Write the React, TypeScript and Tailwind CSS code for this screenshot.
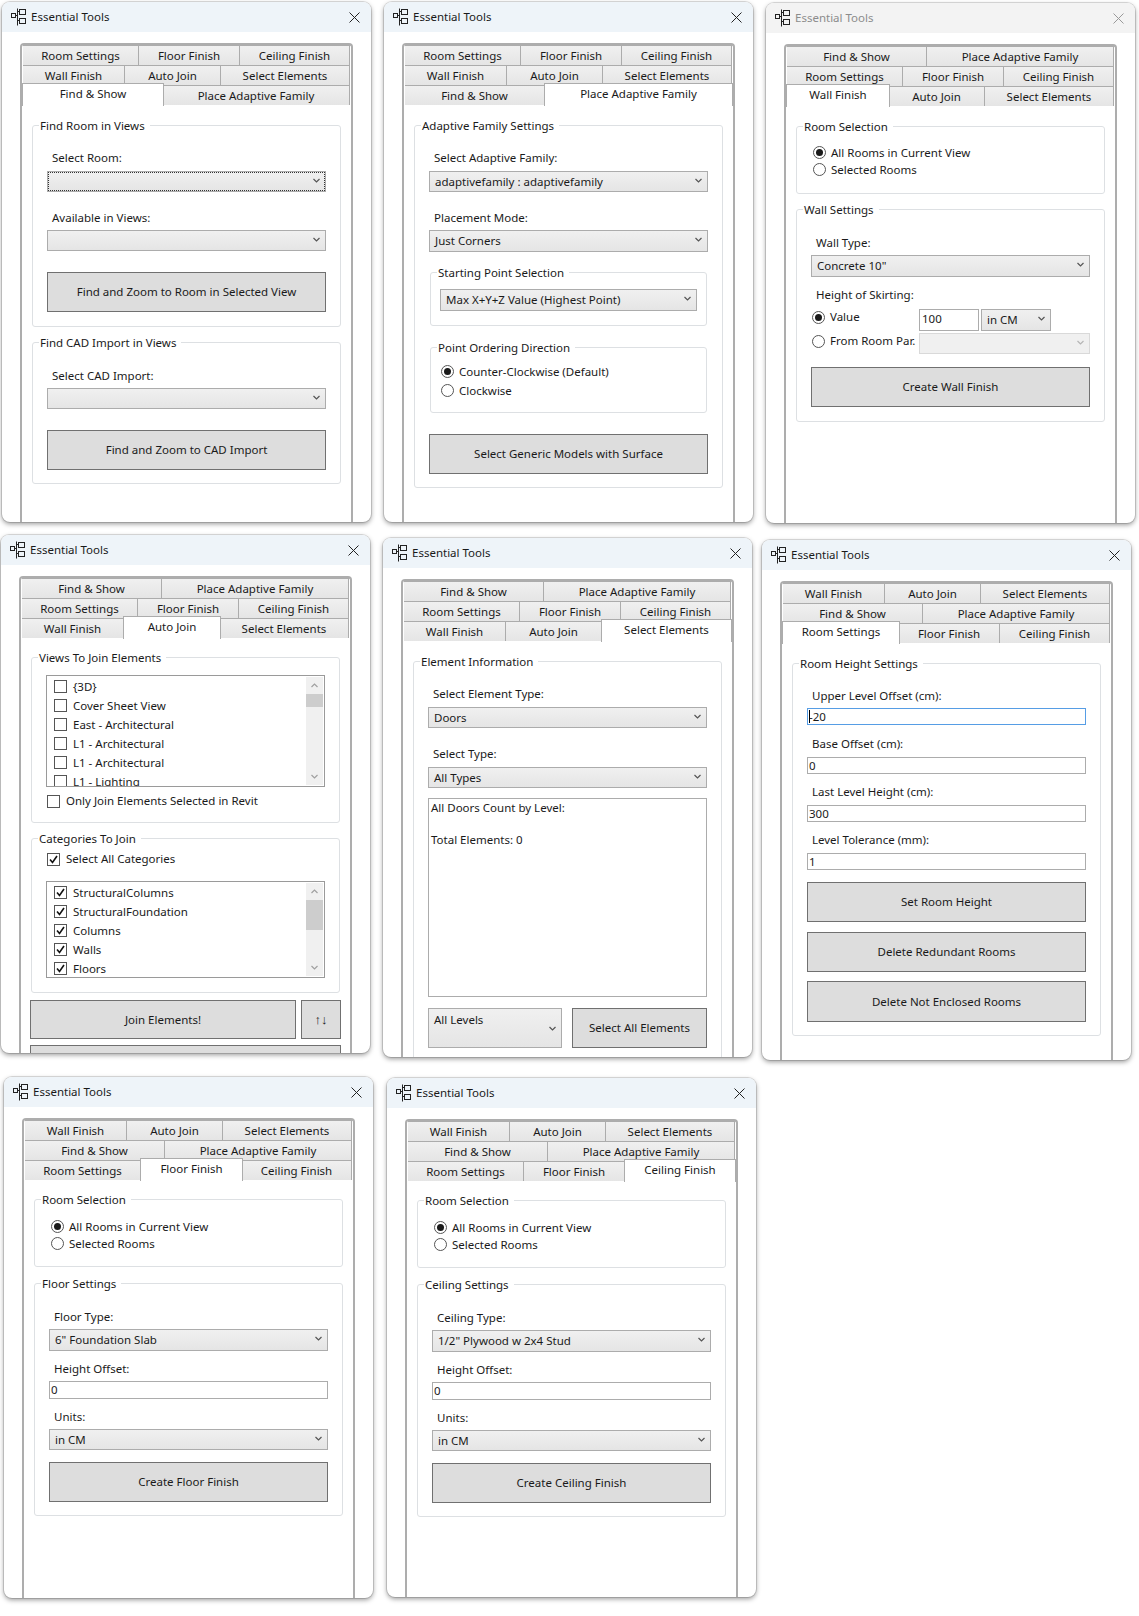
import React from 'react';

type Tab = { label: string; width: string };

const ROW_ROOM: Tab[] = [
  { label: 'Room Settings', width: 'w-[116px]' },
  { label: 'Floor Finish', width: 'w-[101px]' },
  { label: 'Ceiling Finish', width: 'w-[110px]' },
];
const ROW_WALL: Tab[] = [
  { label: 'Wall Finish', width: 'w-[102px]' },
  { label: 'Auto Join', width: 'w-[96px]' },
  { label: 'Select Elements', width: 'w-[129px]' },
];
const ROW_FIND: Tab[] = [
  { label: 'Find & Show', width: 'w-[140px]' },
  { label: 'Place Adaptive Family', width: 'w-[187px]' },
];

function AppIcon() {
  return (
    <svg width="16" height="18" viewBox="0 0 16 18" fill="none" stroke="#222" strokeWidth="1">
      <rect x="0.5" y="5.5" width="4" height="4" />
      <path d="M6.5 0.5V17.5M4.5 7.5H6.5M6.5 3.5H9M6.5 12.5H9" />
      <rect x="8.5" y="1.5" width="6" height="5" />
      <rect x="8.5" y="10.5" width="6" height="5" />
    </svg>
  );
}

function Chevron({ up, color = '#555555', className = '' }: { up?: boolean; color?: string; className?: string }) {
  return (
    <svg width="7" height="5" viewBox="0 0 7 5" fill="none" stroke={color} strokeWidth="1.2" className={className}>
      <path d={up ? 'M0.5 4L3.5 1L6.5 4' : 'M0.5 1L3.5 4L6.5 1'} />
    </svg>
  );
}

function TabStrip({ rows, active }: { rows: Tab[][]; active: string }) {
  return (
    <div className="flex flex-col h-[60px] pl-[1px] shrink-0">
      {rows.map((row, i) => (
        <div key={i} className="flex h-[20px]">
          {row.map((tab) => (
            <div key={tab.label} className={`relative h-[20px] ${tab.width}`}>
              {tab.label === active ? (
                <div className="absolute -left-[1px] -right-[1px] -top-[2px] -bottom-[1px] z-10 bg-white border border-b-0 border-[#acacac] flex items-center justify-center pb-[2px]">
                  {tab.label}
                </div>
              ) : (
                <div className="h-full bg-gradient-to-b from-[#f0f0f0] to-[#e5e5e5] border-t border-r border-[#acacac] flex items-center justify-center">
                  {tab.label}
                </div>
              )}
            </div>
          ))}
        </div>
      ))}
    </div>
  );
}

function Window({
  className,
  rows,
  active,
  inactive,
  children,
}: {
  className: string;
  rows: Tab[][];
  active: string;
  inactive?: boolean;
  children: React.ReactNode;
}) {
  return (
    <div
      className={`w-[369px] shrink-0 flex flex-col overflow-hidden rounded-[8px] bg-white shadow-[0_0_0_1px_rgba(0,0,0,0.12),0_2px_5px_rgba(0,0,0,0.4)] ${className}`}
    >
      <div
        className={`h-[30px] shrink-0 flex items-center pl-[9px] pr-[11px] ${
          inactive ? 'bg-[#f3f3f3] text-[#8c8c8c]' : 'bg-[#eef4f9] text-[#1a1a1a]'
        }`}
      >
        <AppIcon />
        <span className="ml-[4px] flex-1">Essential Tools</span>
        <svg width="11" height="11" viewBox="0 0 11 11" stroke={inactive ? '#999999' : '#222222'} strokeWidth="1">
          <path d="M0.5 0.5L10.5 10.5M10.5 0.5L0.5 10.5" />
        </svg>
      </div>
      <div className="mt-[11px] mx-[18px] flex-1 min-h-0 flex flex-col border-2 border-b-0 border-[#adadad] rounded-t-[4px]">
        <TabStrip rows={rows} active={active} />
        <div className="flex-1 min-h-0 px-[10px]">{children}</div>
      </div>
    </div>
  );
}

function Group({ title, className, children }: { title: string; className: string; children: React.ReactNode }) {
  return (
    <div className={`relative border border-[#dde0e3] rounded-[3px] px-[14px] ${className}`}>
      <span className="absolute -top-[8px] left-[6px] bg-white px-[1px] pr-[5px] h-[16px] leading-[16px] whitespace-nowrap">
        {title}
      </span>
      {children}
    </div>
  );
}

function Label({ className, children }: { className: string; children: React.ReactNode }) {
  return <div className={`h-[16px] leading-[16px] pl-[5px] ${className}`}>{children}</div>;
}

function Combo({
  className = 'h-[21px]',
  value,
  focused,
  disabled,
  top,
}: {
  className?: string;
  value?: string;
  focused?: boolean;
  disabled?: boolean;
  top?: boolean;
}) {
  return (
    <div
      className={`flex justify-between border pl-[5px] pr-[5px] ${top ? 'pt-[3px]' : 'items-center'} ${
        disabled ? 'bg-[#f0f0f0] border-[#d9d9d9]' : 'bg-gradient-to-b from-[#f0f0f0] to-[#e5e5e5] border-[#acacac]'
      } ${focused ? 'outline-1 outline-dotted outline-[#333333] -outline-offset-2' : ''} ${className}`}
    >
      <span className="whitespace-nowrap leading-[16px]">{value}</span>
      <Chevron color={disabled ? '#b5b5b5' : '#555555'} className={top ? 'self-center mb-[3px]' : 'mb-[3px]'} />
    </div>
  );
}

function Btn({ className, children }: { className: string; children: React.ReactNode }) {
  return (
    <button className={`block bg-[#dddddd] border border-[#707070] text-center ${className}`}>{children}</button>
  );
}

function TextBox({ value, className, focused }: { value: string; className: string; focused?: boolean }) {
  return (
    <div
      className={`relative bg-white border pl-[1px] leading-[15px] ${
        focused ? 'border-[#569de5]' : 'border-[#acacac]'
      } ${className}`}
    >
      {focused && <span className="absolute left-[1px] top-[1px] w-[1px] h-[13px] bg-black" />}
      {value}
    </div>
  );
}

function Radio({ label, checked, className = '' }: { label: string; checked?: boolean; className?: string }) {
  return (
    <div className={`flex items-center gap-[5px] whitespace-nowrap ${className}`}>
      <span className="w-[13px] h-[13px] rounded-full border border-[#555555] flex items-center justify-center shrink-0">
        {checked && <span className="w-[7px] h-[7px] rounded-full bg-[#1a1a1a]" />}
      </span>
      {label}
    </div>
  );
}

function Check({ label, checked, className = '' }: { label: string; checked?: boolean; className?: string }) {
  return (
    <div className={`flex items-center gap-[6px] whitespace-nowrap ${className}`}>
      <span className="w-[13px] h-[13px] border border-[#555555] flex items-center justify-center shrink-0">
        {checked && (
          <svg width="11" height="11" viewBox="0 0 11 11" fill="none" stroke="#111111" strokeWidth="1.6">
            <path d="M2 5.5L4.5 8.5L9 2" />
          </svg>
        )}
      </span>
      {label}
    </div>
  );
}

function CheckList({
  items,
  checked,
  className,
  thumb,
}: {
  items: string[];
  checked?: boolean;
  className: string;
  thumb: string;
}) {
  return (
    <div className={`flex border border-[#9a9a9a] overflow-hidden ${className}`}>
      <div className="flex-1 pl-[7px] pt-[1px] overflow-hidden">
        {items.map((item, i) => (
          <Check key={i} label={item} checked={checked} className="h-[19px]" />
        ))}
      </div>
      <div className="w-[17px] mr-[1px] my-[1px] bg-[#f0f0f0] flex flex-col items-center shrink-0">
        <div className="h-[17px] flex items-center justify-center shrink-0">
          <Chevron up color="#a0a0a0" />
        </div>
        <div className={`w-full bg-[#cdcdcd] shrink-0 ${thumb}`} />
        <div className="mt-auto h-[17px] flex items-center justify-center shrink-0">
          <Chevron color="#a0a0a0" />
        </div>
      </div>
    </div>
  );
}

function RoomSelection({ className, rowsTop }: { className: string; rowsTop: string }) {
  return (
    <Group title="Room Selection" className={className}>
      <Radio label="All Rooms in Current View" checked className={`h-[17px] ml-[2px] ${rowsTop}`} />
      <Radio label="Selected Rooms" className="h-[17px] ml-[2px]" />
    </Group>
  );
}

function FinishWindow({
  className,
  active,
  kind,
  typeValue,
}: {
  className: string;
  active: string;
  kind: string;
  typeValue: string;
}) {
  return (
    <Window className={className} rows={[ROW_WALL, ROW_FIND, ROW_ROOM]} active={active}>
      <RoomSelection className="mt-[19px] h-[68px]" rowsTop="mt-[18px]" />
      <Group title={`${kind} Settings`} className="mt-[16px] h-[233px]">
        <Label className="mt-[25px]">{kind} Type:</Label>
        <Combo value={typeValue} className="mt-[4px] h-[22px]" />
        <Label className="mt-[10px]">Height Offset:</Label>
        <TextBox value="0" className="mt-[4px] h-[18px]" />
        <Label className="mt-[10px]">Units:</Label>
        <Combo value="in CM" className="mt-[4px] h-[21px]" />
        <Btn className="mt-[12px] h-[40px] w-full">Create {kind} Finish</Btn>
      </Group>
    </Window>
  );
}

export default function App() {
  return (
    <div className="w-[1139px] h-[1616px] overflow-hidden bg-white text-[#1a1a1a] text-[11.5px] font-['Noto_Sans',sans-serif]">
      <div className="flex items-start">
        <Window className="ml-[2px] mt-[2px] h-[520px]" rows={[ROW_ROOM, ROW_WALL, ROW_FIND]} active="Find & Show">
          <Group title="Find Room in Views" className="mt-[20px] h-[202px]">
            <Label className="mt-[24px]">Select Room:</Label>
            <Combo focused className="mt-[5px] h-[21px]" />
            <Label className="mt-[18px]">Available in Views:</Label>
            <Combo className="mt-[4px] h-[21px]" />
            <Btn className="mt-[21px] h-[40px] w-full">Find and Zoom to Room in Selected View</Btn>
          </Group>
          <Group title="Find CAD Import in Views" className="mt-[15px] h-[142px]">
            <Label className="mt-[25px]">Select CAD Import:</Label>
            <Combo className="mt-[4px] h-[21px]" />
            <Btn className="mt-[21px] h-[40px] w-full">Find and Zoom to CAD Import</Btn>
          </Group>
        </Window>

        <Window
          className="ml-[13px] mt-[2px] h-[520px]"
          rows={[ROW_ROOM, ROW_WALL, ROW_FIND]}
          active="Place Adaptive Family"
        >
          <Group title="Adaptive Family Settings" className="mt-[20px] h-[363px]">
            <Label className="mt-[24px]">Select Adaptive Family:</Label>
            <Combo value="adaptivefamily : adaptivefamily" className="mt-[5px] h-[21px]" />
            <Label className="mt-[18px]">Placement Mode:</Label>
            <Combo value="Just Corners" className="mt-[4px] h-[22px]" />
            <Group title="Starting Point Selection" className="mt-[20px] mx-[1px] h-[54px] !px-[9px]">
              <Combo value="Max X+Y+Z Value (Highest Point)" className="mt-[16px] h-[22px]" />
            </Group>
            <Group title="Point Ordering Direction" className="mt-[21px] mx-[1px] h-[66px] !px-[10px]">
              <Radio label="Counter-Clockwise (Default)" checked className="mt-[14px] h-[19px]" />
              <Radio label="Clockwise" className="h-[19px]" />
            </Group>
            <Btn className="mt-[21px] h-[40px] w-full">Select Generic Models with Surface</Btn>
          </Group>
        </Window>

        <Window
          className="ml-[13px] mt-[3px] h-[520px]"
          rows={[ROW_FIND, ROW_ROOM, ROW_WALL]}
          active="Wall Finish"
          inactive
        >
          <RoomSelection className="mt-[20px] h-[68px]" rowsTop="mt-[17px]" />
          <Group title="Wall Settings" className="mt-[15px] h-[213px]">
            <Label className="mt-[25px]">Wall Type:</Label>
            <Combo value={'Concrete 10"'} className="mt-[4px] h-[22px]" />
            <Label className="mt-[10px]">Height of Skirting:</Label>
            <div className="mt-[6px] flex h-[22px]">
              <Radio label="Value" checked className="w-[108px] h-[16px] ml-[1px] shrink-0 -mr-[1px]" />
              <TextBox value="100" className="w-[60px] h-[22px] !pl-[2px] !leading-[18px]" />
              <Combo value="in CM" className="ml-[2px] w-[70px] h-[22px]" />
            </div>
            <div className="mt-[2px] flex h-[21px]">
              <Radio label="From Room Par." className="w-[108px] h-[16px] ml-[1px] shrink-0 -mr-[1px]" />
              <Combo disabled className="w-[171px] h-[21px]" />
            </div>
            <Btn className="mt-[13px] h-[40px] w-full">Create Wall Finish</Btn>
          </Group>
        </Window>
      </div>

      <div className="flex items-start">
        <Window className="ml-[1px] mt-[12px] h-[518px]" rows={[ROW_FIND, ROW_ROOM, ROW_WALL]} active="Auto Join">
          <Group title="Views To Join Elements" className="mt-[19px] h-[166px]">
            <CheckList
              className="mt-[17px] h-[112px]"
              thumb="h-[13px]"
              items={['{3D}', 'Cover Sheet View', 'East - Architectural', 'L1 - Architectural', 'L1 - Architectural', 'L1 - Lighting']}
            />
            <Check label="Only Join Elements Selected in Revit" className="mt-[6px] ml-[1px] h-[16px]" />
          </Group>
          <Group title="Categories To Join" className="mt-[15px] h-[155px]">
            <Check label="Select All Categories" checked className="mt-[12px] ml-[1px] h-[16px]" />
            <CheckList
              checked
              className="mt-[14px] h-[97px]"
              thumb="h-[30px]"
              items={['StructuralColumns', 'StructuralFoundation', 'Columns', 'Walls', 'Floors']}
            />
          </Group>
          <div className="mt-[7px] -mx-[1px] flex gap-[5px]">
            <Btn className="w-[266px] h-[39px]">Join Elements!</Btn>
            <Btn className="w-[40px] h-[39px] text-[13px]">↑↓</Btn>
          </div>
          <Btn className="mt-[6px] -ml-[1px] w-[311px] h-[40px]">{''}</Btn>
        </Window>

        <Window className="ml-[13px] mt-[15px] h-[519px]" rows={[ROW_FIND, ROW_ROOM, ROW_WALL]} active="Select Elements">
          <Group title="Element Information" className="mt-[20px] h-[460px]">
            <Label className="mt-[24px]">Select Element Type:</Label>
            <Combo value="Doors" className="mt-[5px] h-[21px]" />
            <Label className="mt-[18px]">Select Type:</Label>
            <Combo value="All Types" className="mt-[5px] h-[21px]" />
            <div className="mt-[10px] h-[199px] border border-[#acacac] pl-[2px] pt-[1px] leading-[16px]">
              All Doors Count by Level:
              <br />
              <br />
              Total Elements: 0
            </div>
            <div className="mt-[11px] flex gap-[10px]">
              <Combo value="All Levels" top className="w-[134px] h-[40px]" />
              <Btn className="w-[135px] h-[40px]">Select All Elements</Btn>
            </div>
          </Group>
        </Window>

        <Window className="ml-[10px] mt-[17px] h-[520px]" rows={[ROW_WALL, ROW_FIND, ROW_ROOM]} active="Room Settings">
          <Group title="Room Height Settings" className="mt-[20px] h-[373px]">
            <Label className="mt-[24px]">Upper Level Offset (cm):</Label>
            <TextBox value="-20" focused className="mt-[4px] h-[17px]" />
            <Label className="mt-[11px]">Base Offset (cm):</Label>
            <TextBox value="0" className="mt-[5px] h-[17px]" />
            <Label className="mt-[10px]">Last Level Height (cm):</Label>
            <TextBox value="300" className="mt-[5px] h-[17px]" />
            <Label className="mt-[10px]">Level Tolerance (mm):</Label>
            <TextBox value="1" className="mt-[5px] h-[17px]" />
            <Btn className="mt-[12px] h-[40px] w-full">Set Room Height</Btn>
            <Btn className="mt-[10px] h-[40px] w-full">Delete Redundant Rooms</Btn>
            <Btn className="mt-[9px] h-[41px] w-full">Delete Not Enclosed Rooms</Btn>
          </Group>
        </Window>
      </div>

      <div className="flex items-start">
        <FinishWindow className="ml-[4px] mt-[17px] h-[521px]" active="Floor Finish" kind="Floor" typeValue={'6" Foundation Slab'} />
        <FinishWindow className="ml-[14px] mt-[18px] h-[519px]" active="Ceiling Finish" kind="Ceiling" typeValue={'1/2" Plywood w 2x4 Stud'} />
      </div>
    </div>
  );
}
